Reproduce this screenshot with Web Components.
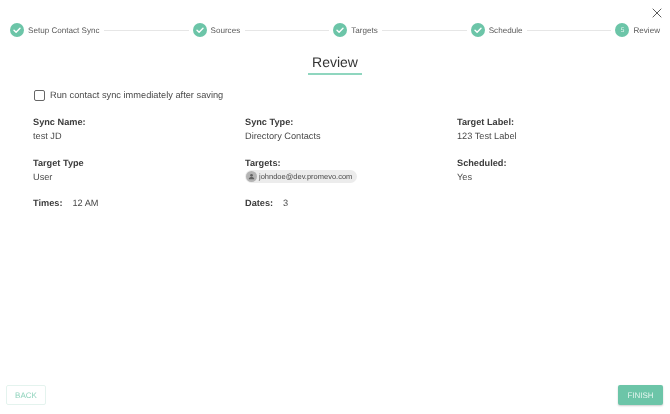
<!DOCTYPE html>
<html>
<head>
<meta charset="utf-8">
<title>Review</title>
<style>
html, body { margin: 0; height: 100%; background: #fff; }
body { font-family: "Liberation Sans", Arial, sans-serif; color: #424242; text-rendering: geometricPrecision; }
</style>
</head>
<body>
<template id="sync-step-tpl">
<style>
:host { display: flex; align-items: center; gap: 4px; white-space: nowrap; font-size: 8.1px; color: #5a5a5a; }
.dot { width: 14px; height: 14px; border-radius: 50%; background: #6cc5a8; display: flex; align-items: center; justify-content: center; color: #e4f5ef; font-size: 6.5px; }
svg { width: 10px; height: 10px; display: block; }
</style>
<span class="dot"></span><slot></slot>
</template>

<template id="sync-stepper-tpl">
<style>
:host { display: flex; align-items: center; padding: 0 10px; height: 14px; }
::slotted(hr) { flex: 1; height: 1px; border: 0; background: #e6e6e6; margin: 0 4px 0 4.5px; }
</style>
<slot></slot>
</template>

<template id="review-field-tpl">
<style>
:host { display: block; font-size: 9.2px; line-height: 14px; color: #484848; }
.label { font-weight: 700; color: #3c3c3c; }
:host([inline]) { display: flex; gap: 10px; }
</style>
<div class="label"></div><div><slot></slot></div>
</template>

<template id="user-chip-tpl">
<style>
:host { display: inline-flex; align-items: center; gap: 2px; height: 13px; padding: 0 5px 0 1px; border-radius: 6.5px; background: #ececec; font-size: 7.5px; color: #4a4a4a; vertical-align: top; margin-top: 0.5px; }
.av { width: 11px; height: 11px; border-radius: 50%; background: #b4b4b4; display: flex; align-items: center; justify-content: center; }
svg { width: 7px; height: 7px; display: block; }
</style>
<span class="av"><svg viewBox="0 0 24 24" fill="#616161"><circle cx="12" cy="8" r="4.5"/><path d="M3 21v-2c0-3.5 5-5.5 9-5.5s9 2 9 5.5v2z"/></svg></span><slot></slot>
</template>

<template id="sync-button-tpl">
<style>
:host { display: inline-flex; align-items: center; justify-content: center; box-sizing: border-box; height: 20px; border-radius: 2px; font-size: 8px; }
:host([variant=outline]) { width: 40px; color: #8fd3bc; border: 1px solid #e4f3ee; background: #fff; }
:host([variant=solid]) { width: 45px; color: #e4f5ef; background: #6cc5a8; box-shadow: 0 1px 2px rgba(0,0,0,.2); }
</style>
<slot></slot>
</template>

<template id="review-dialog-tpl">
<style>
:host { display: flex; flex-direction: column; height: 414px; box-sizing: border-box; position: relative; filter: blur(.3px); }
.close { position: absolute; left: 652px; top: 8px; width: 10px; height: 10px; }
.steps { padding-top: 23px; }
h1 { align-self: center; margin: 17px 0 0; width: 54px; height: 21px; box-sizing: border-box; text-align: center; font-size: 14px; line-height: 17px; font-weight: 400; color: #333; border-bottom: 2px solid #8fd6bf; }
.opt { display: flex; align-items: center; gap: 5.5px; margin: 14px 0 0 33.5px; font-size: 9.25px; line-height: 12px; color: #4a4a4a; }
.box { width: 11px; height: 11px; box-sizing: border-box; border: 1.5px solid #666; border-radius: 2px; }
.grid { display: grid; grid-template-columns: 212px 212px 180px; grid-auto-rows: 27px; row-gap: 13.5px; margin: 14px 0 0 33px; }
.grow { flex: 1; }
.foot { display: flex; justify-content: space-between; padding: 0 7px 9px 6px; }
</style>
<svg class="close" viewBox="0 0 10 10" stroke="#5c5c5c" stroke-width="1"><path d="M.7.7l8.6 8.6M9.3.7L.7 9.3"/></svg>
<div class="steps"><slot name="steps"></slot></div>
<h1>Review</h1>
<div class="opt"><span class="box"></span><span>Run contact sync immediately after saving</span></div>
<div class="grid"><slot name="fields"></slot></div>
<div class="grow"></div>
<div class="foot"><slot name="actions"></slot></div>
</template>

<review-dialog>
  <sync-stepper slot="steps">
    <sync-step>Setup Contact Sync</sync-step><hr>
    <sync-step>Sources</sync-step><hr>
    <sync-step>Targets</sync-step><hr>
    <sync-step>Schedule</sync-step><hr>
    <sync-step number="5">Review</sync-step>
  </sync-stepper>
  <review-field slot="fields" label="Sync Name:">test JD</review-field>
  <review-field slot="fields" label="Sync Type:">Directory Contacts</review-field>
  <review-field slot="fields" label="Target Label:">123 Test Label</review-field>
  <review-field slot="fields" label="Target Type">User</review-field>
  <review-field slot="fields" label="Targets:"><user-chip>johndoe@dev.promevo.com</user-chip></review-field>
  <review-field slot="fields" label="Scheduled:">Yes</review-field>
  <review-field slot="fields" label="Times:" inline>12 AM</review-field>
  <review-field slot="fields" label="Dates:" inline>3</review-field>
  <sync-button slot="actions" variant="outline">BACK</sync-button>
  <sync-button slot="actions" variant="solid">FINISH</sync-button>
</review-dialog>

<script>
function fromTemplate(el, id) {
    const root = el.attachShadow({ mode: 'open' });
    root.appendChild(document.getElementById(id).content.cloneNode(true));
    return root;
}
class SyncStep extends HTMLElement {
    constructor() {
        super();
        const root = fromTemplate(this, 'sync-step-tpl');
        const dot = root.querySelector('.dot');
        const n = this.getAttribute('number');
        if (n) dot.textContent = n;
        else dot.innerHTML = '<svg viewBox="0 0 10 10" fill="none" stroke="#fff" stroke-width="1.4" stroke-linecap="round" stroke-linejoin="round"><path d="M2 5.2l2.1 2.1L8 3.2"/></svg>';
    }
}
class SyncStepper extends HTMLElement {
    constructor() { super(); fromTemplate(this, 'sync-stepper-tpl'); }
}
class ReviewField extends HTMLElement {
    constructor() {
        super();
        const root = fromTemplate(this, 'review-field-tpl');
        root.querySelector('.label').textContent = this.getAttribute('label');
    }
}
class UserChip extends HTMLElement {
    constructor() { super(); fromTemplate(this, 'user-chip-tpl'); }
}
class SyncButton extends HTMLElement {
    constructor() { super(); fromTemplate(this, 'sync-button-tpl'); }
}
class ReviewDialog extends HTMLElement {
    constructor() { super(); fromTemplate(this, 'review-dialog-tpl'); }
}
customElements.define('sync-step', SyncStep);
customElements.define('sync-stepper', SyncStepper);
customElements.define('review-field', ReviewField);
customElements.define('user-chip', UserChip);
customElements.define('sync-button', SyncButton);
customElements.define('review-dialog', ReviewDialog);
</script>
</body>
</html>
